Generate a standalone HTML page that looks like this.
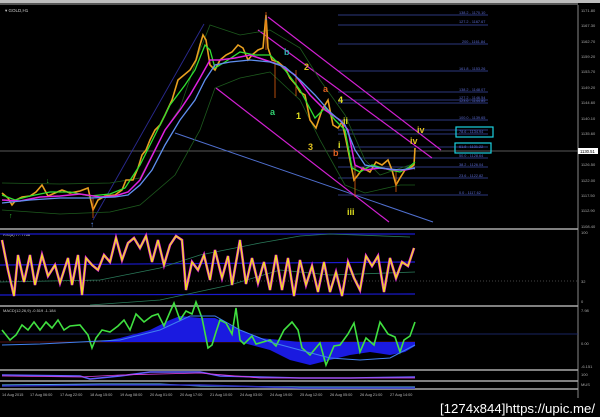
<!DOCTYPE html>
<html><head><meta charset="utf-8"><style>
html,body{margin:0;padding:0;background:#000;width:600px;height:417px;overflow:hidden}
svg{display:block}
text{font-family:"Liberation Sans",sans-serif}
</style></head><body>
<svg width="600" height="417" viewBox="0 0 600 417" xmlns="http://www.w3.org/2000/svg">
<rect width="600" height="417" fill="#000"/>
<rect x="0" y="0" width="600" height="3" fill="#bdbdbd"/>
<rect x="0" y="3" width="578" height="2" fill="#555"/>
<line x1="578" y1="5" x2="578" y2="398" stroke="#888" stroke-width="1"/>
<g stroke="#aaa" stroke-width="1.5">
<line x1="0" y1="229" x2="578" y2="229"/>
<line x1="0" y1="306" x2="578" y2="306"/>
<line x1="0" y1="370" x2="578" y2="370"/>
<line x1="0" y1="381" x2="578" y2="381"/>
<line x1="0" y1="389" x2="578" y2="389"/>
</g>
<text x="5" y="12" font-size="4.5" fill="#ccc">▾ GOLD,H1</text>
<g font-size="4" fill="#aaa">
<text x="581" y="12">1171.80</text><text x="581" y="27">1167.30</text><text x="581" y="43">1162.70</text>
<text x="581" y="58">1159.20</text><text x="581" y="73">1153.70</text><text x="581" y="89">1149.20</text>
<text x="581" y="104">1144.60</text><text x="581" y="120">1140.10</text><text x="581" y="135">1135.60</text>
<text x="581" y="166">1126.50</text><text x="581" y="182">1122.00</text><text x="581" y="197">1117.50</text>
<text x="581" y="212">1112.90</text><text x="581" y="228">1108.40</text>
<text x="581" y="234">100</text><text x="581" y="283">32</text><text x="581" y="303">0</text>
<text x="581" y="312">7.98</text><text x="581" y="345">0.00</text><text x="581" y="368">-6.151</text>
<text x="581" y="376">100</text><text x="581" y="386">MUS</text>
</g>
<rect x="578" y="148" width="20" height="6" fill="#fff"/>
<text x="580" y="153" font-size="4.2" fill="#000">1130.51</text>
<line x1="0" y1="151" x2="578" y2="151" stroke="#777" stroke-width="0.8"/>
<g stroke="#3a4aa8" stroke-width="0.8">
<line x1="338" y1="15" x2="488" y2="15"/><line x1="338" y1="25" x2="488" y2="25"/>
<line x1="338" y1="44" x2="488" y2="44"/><line x1="338" y1="71" x2="488" y2="71"/>
<line x1="338" y1="92" x2="488" y2="92"/><line x1="338" y1="100" x2="488" y2="100"/>
<line x1="338" y1="103" x2="488" y2="103"/><line x1="338" y1="120" x2="488" y2="120"/>
<line x1="338" y1="130" x2="488" y2="130"/><line x1="338" y1="134" x2="488" y2="134"/>
<line x1="338" y1="147" x2="488" y2="147"/><line x1="338" y1="158" x2="488" y2="158"/>
<line x1="338" y1="167" x2="488" y2="167"/><line x1="338" y1="178" x2="488" y2="178"/>
<line x1="338" y1="195" x2="488" y2="195"/>
</g>
<g font-size="3.8" fill="#5a6ad0">
<text x="459" y="14">138.2 - 1170.10</text><text x="459" y="23">127.2 - 1167.67</text>
<text x="462" y="43">200 - 1161.84</text><text x="459" y="70">161.8 - 1153.26</text>
<text x="459" y="91">138.2 - 1148.07</text><text x="459" y="99">127.2 - 1146.54</text>
<text x="459" y="102">123.6 - 1144.85</text><text x="459" y="119">100.0 - 1139.65</text>
<text x="459" y="133">78.6 - 1134.94</text><text x="459" y="148">61.8 - 1131.22</text>
<text x="459" y="157">50.0 - 1128.64</text><text x="459" y="166">38.2 - 1126.04</text>
<text x="459" y="177">23.6 - 1122.82</text><text x="459" y="194">0.0 - 1117.62</text>
</g>
<rect x="456" y="127" width="37" height="10" fill="none" stroke="#1ad0e0" stroke-width="1.2"/>
<rect x="455" y="143" width="36" height="10" fill="none" stroke="#1ad0e0" stroke-width="1.2"/>
<line x1="93" y1="220" x2="204" y2="24" stroke="#2a2a90" stroke-width="0.9"/>
<line x1="175" y1="133" x2="433" y2="222" stroke="#5070d0" stroke-width="1"/>
<g stroke="#d020d0" stroke-width="1.2">
<line x1="268" y1="17" x2="441" y2="150"/>
<line x1="258" y1="30" x2="432" y2="158"/>
<line x1="216" y1="88" x2="389" y2="222"/>
</g>
<polyline fill="none" stroke="#1d5a1d" stroke-width="0.8" points="2,183 60,184 110,183 140,178 165,130 180,108 200,50 210,25 240,35 270,30 300,48 320,80 345,115 365,160 380,175 410,165 415,170"/>
<polyline fill="none" stroke="#1d5a1d" stroke-width="0.8" points="2,210 60,214 110,212 140,205 175,175 200,130 215,88 240,78 270,72 300,100 320,140 345,185 365,193 400,185 415,185"/>
<polyline fill="none" stroke="#e8a020" stroke-width="1.6" points="2,193 8,198 12,205 16,200 22,197 30,196 36,192 42,185 48,196 55,193 62,190 70,193 80,191 88,188 93,210 98,200 105,196 115,195 122,190 126,180 133,180 138,168 142,155 146,150 150,140 155,130 160,125 165,115 172,100 178,80 184,75 190,70 196,60 200,45 203,35 206,40 210,65 215,70 220,60 226,55 232,52 238,45 243,48 248,60 252,55 258,50 263,48 266,15 268,48 272,60 278,62 285,68 290,78 296,85 300,92 305,95 310,120 316,128 322,110 328,100 333,125 338,128 342,122 346,140 350,160 354,180 358,175 363,168 370,172 376,162 382,165 388,160 392,170 396,185 400,178 405,170 410,168 414,165 415,148"/>
<g stroke="#e06010" stroke-width="0.8">
<line x1="93" y1="198" x2="93" y2="218"/><line x1="266" y1="12" x2="266" y2="50"/>
<line x1="275" y1="60" x2="275" y2="98"/><line x1="296" y1="70" x2="296" y2="96"/>
<line x1="355" y1="165" x2="355" y2="197"/><line x1="396" y1="170" x2="396" y2="192"/>
</g>
<polyline fill="none" stroke="#30e030" stroke-width="1.3" points="2,195 15,200 30,196 50,192 70,192 90,196 110,194 125,188 140,165 155,135 170,105 185,85 195,70 205,45 210,50 215,68 225,62 240,52 255,55 270,55 285,70 300,90 315,118 325,108 335,120 345,130 352,168 360,172 372,165 390,170 400,172 408,168 415,162"/>
<polyline fill="none" stroke="#e020e0" stroke-width="1.5" points="2,200 20,201 40,197 60,196 80,194 100,197 115,196 128,192 140,180 150,160 165,130 180,110 190,95 200,78 210,60 220,60 235,58 250,55 265,60 280,65 295,75 310,95 325,110 340,120 348,130 355,165 365,170 380,168 395,170 405,170 415,168"/>
<polyline fill="none" stroke="#6090f0" stroke-width="1.3" points="2,203 30,200 60,198 90,198 115,197 128,195 140,185 152,170 165,145 180,120 195,100 205,80 215,65 230,62 250,60 270,62 285,67 300,80 315,95 330,112 345,125 355,150 365,165 380,168 400,170 415,168"/>
<text x="264" y="20" font-size="8" fill="#6090f0">↓</text>
<text x="90" y="227" font-size="8" fill="#6090f0">↑</text>
<text x="46" y="183" font-size="7" fill="#30c030">↓</text>
<text x="9" y="218" font-size="7" fill="#30c030">↑</text>
<g font-family="Liberation Serif" font-weight="bold" font-size="9">
<text x="270" y="115" fill="#30d070">a</text>
<text x="284" y="55" fill="#30b0b0">b</text>
<text x="304" y="70" fill="#e0c020">2</text>
<text x="323" y="92" fill="#e06020">a</text>
<text x="338" y="103" fill="#e0e020">4</text>
<text x="296" y="119" fill="#e0e020">1</text>
<text x="343" y="124" fill="#e0e020">ii</text>
<text x="308" y="150" fill="#e0c020">3</text>
<text x="333" y="156" fill="#e06020">b</text>
<text x="338" y="148" fill="#e0e020">i</text>
<text x="347" y="215" fill="#e0e020">iii</text>
<text x="417" y="133" fill="#e0c020">iv</text>
<text x="410" y="144" fill="#e0c020">iv</text>
</g>
<text x="3" y="236" font-size="4" fill="#ccc">RSI(8) 77.7768</text>
<g stroke="#1a1ad0" stroke-width="1.2">
<line x1="0" y1="234" x2="415" y2="234"/><line x1="0" y1="265" x2="415" y2="262"/><line x1="0" y1="295" x2="415" y2="294"/>
</g>
<line x1="0" y1="281" x2="578" y2="281" stroke="#444" stroke-dasharray="1,2"/>
<polyline fill="none" stroke="#2a7a5a" stroke-width="0.8" points="0,282 100,280 160,268 200,255 260,243 300,236 330,234 410,237"/>
<polyline fill="none" stroke="#2a7a5a" stroke-width="0.8" points="90,305 160,300 230,285 280,270 330,275 415,272"/>
<polyline fill="none" stroke="#e020e0" stroke-width="2.6" points="2,240 8,270 14,296 18,255 24,282 30,255 35,285 42,255 48,276 55,265 60,283 68,258 72,285 78,255 82,295 86,258 92,265 98,270 104,255 110,262 116,238 122,260 128,243 134,238 140,248 146,236 152,262 158,240 164,265 170,245 176,236 182,240 186,290 192,262 198,270 204,255 210,280 215,250 222,278 228,256 232,285 240,240 246,284 252,258 258,283 264,262 270,290 276,255 282,290 288,258 294,296 300,260 306,285 312,266 318,292 324,262 330,292 336,272 342,296 348,262 354,278 360,290 366,256 372,266 378,256 384,292 390,258 396,278 402,262 408,266 414,248"/>
<polyline fill="none" stroke="#f0e020" stroke-width="1.4" points="2,240 8,270 14,296 18,255 24,282 30,255 35,285 42,255 48,276 55,265 60,283 68,258 72,285 78,255 82,295 86,258 92,265 98,270 104,255 110,262 116,238 122,260 128,243 134,238 140,248 146,236 152,262 158,240 164,265 170,245 176,236 182,240 186,290 192,262 198,270 204,255 210,280 215,250 222,278 228,256 232,285 240,240 246,284 252,258 258,283 264,262 270,290 276,255 282,290 288,258 294,296 300,260 306,285 312,266 318,292 324,262 330,292 336,272 342,296 348,262 354,278 360,290 366,256 372,266 378,256 384,292 390,258 396,278 402,262 408,266 414,248"/>
<text x="3" y="312" font-size="4" fill="#ccc">MACD(12,26,9) -0.519 -1.184</text>
<line x1="0" y1="334" x2="578" y2="334" stroke="#203080" stroke-width="0.8"/>
<line x1="0" y1="342" x2="415" y2="342" stroke="#a02020" stroke-width="0.6"/>
<path d="M100,342 L120,338 L150,330 L170,320 L180,316 L200,318 L215,318 L240,330 L260,338 L280,340 L300,342 Z" fill="#1a1ae0"/>
<path d="M240,342 L270,350 L290,360 L310,365 L330,360 L350,355 L370,352 L390,355 L405,352 L415,346 L415,342 Z" fill="#1a1ae0"/>
<polyline fill="none" stroke="#40e040" stroke-width="1.6" points="2,330 10,340 16,335 22,325 28,330 34,322 40,330 46,322 52,328 58,320 64,330 70,326 80,325 88,335 92,348 96,338 102,330 110,332 118,326 124,320 130,330 136,314 144,322 152,316 158,314 164,326 170,312 174,303 180,320 186,311 192,314 196,302 202,318 208,348 212,345 216,332 220,320 226,323 232,334 236,308 240,340 244,344 252,336 256,344 270,340 276,346 284,330 292,322 298,330 302,348 310,355 320,343 326,365 334,346 340,345 348,334 354,323 360,352 366,338 374,345 380,322 388,334 395,337 400,352 404,340 410,336 415,322"/>
<polyline fill="none" stroke="#4080f0" stroke-width="1" points="2,345 40,344 80,342 120,340 160,330 190,316 215,316 240,330 270,342 300,350 330,358 360,360 390,358 415,345"/>
<polyline fill="none" stroke="#6060ff" stroke-width="1.5" points="2,375 80,376 90,379 120,376 150,372 200,372 220,376 260,377 300,378 350,378 415,377"/>
<polyline fill="none" stroke="#e040e0" stroke-width="0.8" points="2,376 80,377 120,375 200,373 260,378 415,378"/>
<polyline fill="none" stroke="#60c0f0" stroke-width="1" points="2,385 100,384 160,384 200,386 300,387 415,387"/>
<polyline fill="none" stroke="#3030c0" stroke-width="1.5" points="2,386 100,385 200,385 300,388 415,388"/>
<g font-size="3.8" fill="#bbb">
<text x="2" y="396">14 Aug 2015</text><text x="30" y="396">17 Aug 06:00</text><text x="60" y="396">17 Aug 22:00</text>
<text x="90" y="396">18 Aug 15:00</text><text x="120" y="396">19 Aug 08:00</text><text x="150" y="396">20 Aug 01:00</text>
<text x="180" y="396">20 Aug 17:00</text><text x="210" y="396">21 Aug 10:00</text><text x="240" y="396">24 Aug 03:00</text>
<text x="270" y="396">24 Aug 19:00</text><text x="300" y="396">25 Aug 12:00</text><text x="330" y="396">26 Aug 05:00</text>
<text x="360" y="396">26 Aug 21:00</text><text x="390" y="396">27 Aug 14:00</text>
</g>
<text x="440" y="413" font-size="13" fill="#fff" font-family="Liberation Sans" textLength="155" lengthAdjust="spacingAndGlyphs">[1274x844]https://upic.me/</text>
</svg>
</body></html>
